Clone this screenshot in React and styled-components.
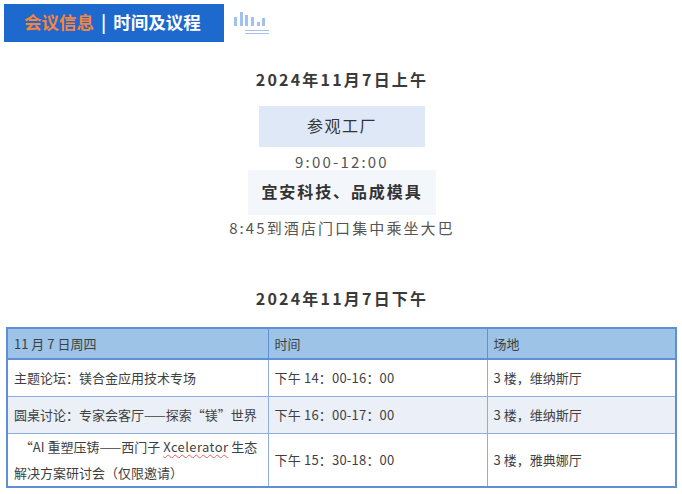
import styled, { createGlobalStyle } from "styled-components";

const Global = createGlobalStyle`
  html, body { margin: 0; padding: 0; background: #fff; }
  body { font-family: "Noto Sans CJK SC", "Noto Sans", sans-serif; overflow: hidden; }
`;

const Page = styled.div`
  width: 682px;
  height: 494px;
  padding-top: 4px;
  box-sizing: border-box;
  overflow: hidden;
`;

const Header = styled.div`
  display: flex;
  align-items: flex-start;
  padding-left: 4px;
  gap: 9px;
`;

const Banner = styled.div`
  width: 220px;
  height: 38px;
  background: #1d69cd;
  display: flex;
  align-items: center;
  padding: 0 0 3px 20px;
  box-sizing: border-box;
  font-size: 17.5px;
  font-weight: 700;
  color: #fff;
  white-space: pre;
`;

const Accent = styled.span`
  color: #f5843c;
`;

const Pipe = styled.span`
  margin: 0 7px;
`;

const BarIcon = styled.svg`
  margin-top: 8px;
  flex: none;
`;

const Section = styled.div`
  display: flex;
  flex-direction: column;
  align-items: center;
  padding-left: 2px;
`;

const DateTitle = styled.div`
  font-size: 16px;
  line-height: 24px;
  font-weight: 700;
  color: #3a3a3a;
  letter-spacing: 2.2px;
  margin-top: ${(p) => p.$top}px;
`;

const Tag = styled.div`
  width: ${(p) => p.$w}px;
  height: ${(p) => p.$h}px;
  background: ${(p) => p.$bg};
  color: #333;
  font-size: 16px;
  font-weight: ${(p) => p.$weight};
  letter-spacing: ${(p) => p.$gap}px;
  display: flex;
  align-items: center;
  justify-content: center;
  padding-bottom: 3px;
  box-sizing: border-box;
  margin-top: ${(p) => p.$top}px;
`;

const Note = styled.div`
  font-size: 15px;
  line-height: 20px;
  color: #555;
  letter-spacing: ${(p) => p.$gap}px;
  margin-top: ${(p) => p.$top}px;
`;

const Table = styled.table`
  border-collapse: collapse;
  table-layout: fixed;
  width: 671px;
  margin: 17px 0 0 6px;
  border: 2px solid #5f8fd8;
  font-size: 13px;
  color: #3f3f3f;
`;

const HeadRow = styled.tr`
  height: 31px;
  background: #9dc3e6;
`;

const Row = styled.tr`
  height: ${(p) => p.$h}px;
  background: ${(p) => p.$bg};
`;

const Cell = styled.td`
  border: 1px solid #8eaee3;
  padding: 0 6px;
  line-height: 26px;
  vertical-align: middle;
  letter-spacing: ${(p) => p.$gap || 0}px;
`;

const HeadCell = styled.th`
  border: 1px solid #5f8fd8;
  border-bottom-width: 2px;
  padding: 0 6px;
  font-weight: 400;
  text-align: left;
  line-height: 20px;
`;

const Line = styled.div`
  white-space: pre;
`;

const Squiggle = styled.span`
  text-decoration: underline wavy #e0606a 1px;
  text-underline-offset: 2px;
  letter-spacing: 0.4px;
`;

const Bars = () => (
  <BarIcon width="36" height="24" viewBox="0 0 36 24">
    <g fill="#a3c1ee">
      <rect x="1" y="5" width="3" height="9" />
      <rect x="7" y="0" width="3" height="14" />
      <rect x="12" y="3" width="3" height="11" />
      <rect x="18" y="5" width="3" height="9" />
      <rect x="24" y="10" width="3" height="4" />
      <rect x="29" y="6" width="3" height="8" />
      <rect x="12" y="18" width="24" height="1" />
      <rect x="12" y="21" width="24" height="1" />
    </g>
  </BarIcon>
);

const rows = [
  { h: 37, bg: "#fff", a: "主题论坛：镁合金应用技术专场", t: "下午 14：00-16：00", p: "3 楼，维纳斯厅" },
  { h: 37, bg: "#eaeff8", a: "圆桌讨论：专家会客厅——探索“镁”世界", t: "下午 16：00-17：00", p: "3 楼，维纳斯厅" },
  {
    h: 52,
    bg: "#fff",
    a: (
      <>
        <Line>  “AI 重塑压铸——西门子 <Squiggle>Xcelerator</Squiggle> 生态</Line>
        <Line>解决方案研讨会（仅限邀请）</Line>
      </>
    ),
    t: "下午 15：30-18：00",
    p: "3 楼，雅典娜厅",
  },
];

export default function App() {
  return (
    <Page>
      <Global />
      <Header>
        <Banner>
          <Accent>会议信息</Accent>
          <Pipe>|</Pipe>时间及议程
        </Banner>
        <Bars />
      </Header>
      <Section>
        <DateTitle $top={25}>2024年11月7日上午</DateTitle>
        <Tag $w={166} $h={41} $bg="#dfe8f7" $weight={400} $gap={1.5} $top={15}>参观工厂</Tag>
        <Note $gap={2.2} $top={5}>9:00-12:00</Note>
        <Tag $w={188} $h={45} $bg="#f3f7fc" $weight={700} $gap={1.9} $top={-2}>宜安科技、品成模具</Tag>
        <Note $gap={2.1} $top={3}>8:45到酒店门口集中乘坐大巴</Note>
        <DateTitle $top={48}>2024年11月7日下午</DateTitle>
      </Section>
      <Table>
        <colgroup>
          <col style={{ width: 261 }} />
          <col style={{ width: 219 }} />
          <col />
        </colgroup>
        <thead>
          <HeadRow>
            <HeadCell>11 月 7 日周四</HeadCell>
            <HeadCell>时间</HeadCell>
            <HeadCell>场地</HeadCell>
          </HeadRow>
        </thead>
        <tbody>
          {rows.map((r) => (
            <Row key={r.t} $h={r.h} $bg={r.bg}>
              <Cell>{r.a}</Cell>
              <Cell $gap={0.2}>{r.t}</Cell>
              <Cell>{r.p}</Cell>
            </Row>
          ))}
        </tbody>
      </Table>
    </Page>
  );
}
